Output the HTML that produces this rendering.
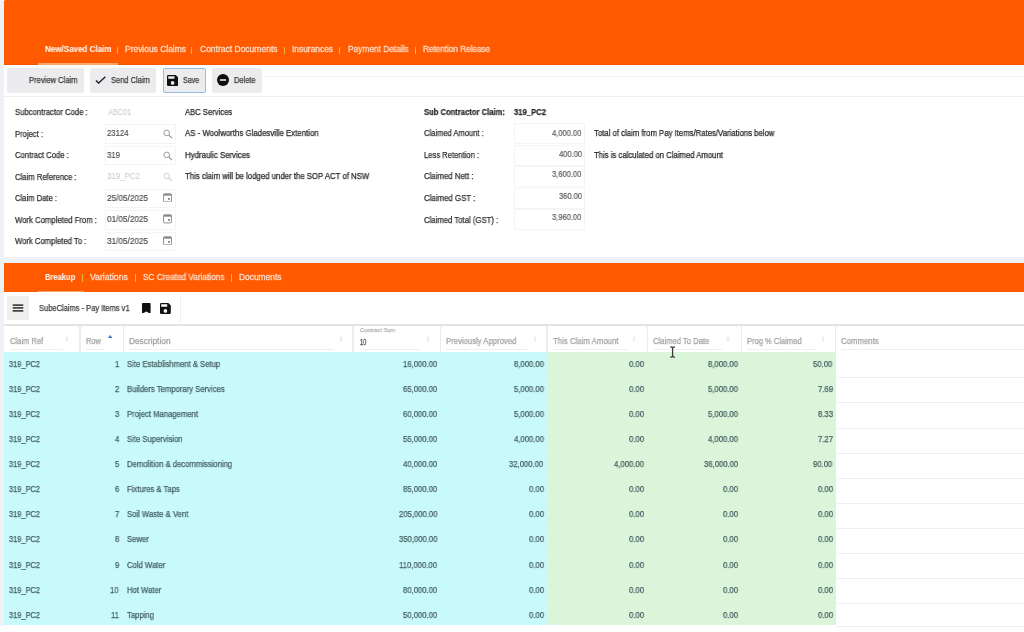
<!DOCTYPE html>
<html><head><meta charset="utf-8">
<style>
*{margin:0;padding:0;box-sizing:border-box}
html,body{width:1024px;height:632px;overflow:hidden;background:#eef1f5;font-family:"Liberation Sans",sans-serif;position:relative}
.t{position:absolute;white-space:pre;line-height:1;transform-origin:0 0;will-change:transform}
svg{display:block}
</style></head><body>
<div style="position:absolute;left:4.00px;top:0.00px;width:1020.00px;height:65.00px;background:#ff5a00;border-top-left-radius:1.5px"></div>
<div style="position:absolute;left:4.00px;top:64.00px;width:1020.00px;height:1.00px;background:#f25400"></div>
<div style="position:absolute;left:38.00px;top:63.00px;width:80.00px;height:2.00px;background:#f9a56e"></div>
<div style="position:absolute;left:116.50px;top:46.60px;width:1.10px;height:7.20px;background:#f2b43a"></div>
<div style="position:absolute;left:191.00px;top:46.60px;width:1.10px;height:7.20px;background:#f2b43a"></div>
<div style="position:absolute;left:283.50px;top:46.60px;width:1.10px;height:7.20px;background:#f2b43a"></div>
<div style="position:absolute;left:338.50px;top:46.60px;width:1.10px;height:7.20px;background:#f2b43a"></div>
<div style="position:absolute;left:414.50px;top:46.60px;width:1.10px;height:7.20px;background:#f2b43a"></div>
<div style="position:absolute;left:4.00px;top:65.00px;width:1020.00px;height:192.50px;background:#fff"></div>
<div style="position:absolute;left:4.00px;top:95.60px;width:1020.00px;height:1.00px;background:#efefef"></div>
<div style="position:absolute;left:264.00px;top:75.80px;width:760.00px;height:0.80px;background:#f3f7f9"></div>
<div style="position:absolute;left:4.00px;top:65.00px;width:1020.00px;height:3.00px;background:#f9fbfd"></div>
<div style="position:absolute;left:7.00px;top:68.00px;width:77.00px;height:25.00px;background:#ececee;border-radius:2px"></div>
<div style="position:absolute;left:90.00px;top:68.00px;width:66.00px;height:25.00px;background:#ececee;border-radius:2px"></div>
<div style="position:absolute;left:162.50px;top:68.20px;width:43.80px;height:24.50px;background:#ececee;border:1px solid #94bde3;border-radius:2px"></div>
<div style="position:absolute;left:212.30px;top:68.00px;width:49.70px;height:25.00px;background:#ececee;border-radius:2px"></div>
<svg style="position:absolute;left:94px;top:75px" width="14" height="10" viewBox="0 0 14 10"><path d="M1.9 5.4 L4.6 8.1 L11.4 1.8" fill="none" stroke="#1e1e1e" stroke-width="1.35"/></svg>
<svg style="position:absolute;left:167.2px;top:74.5px" width="11.2" height="11" viewBox="3 3 18 18" preserveAspectRatio="none"><path d="M17 3H5a2 2 0 0 0-2 2v14a2 2 0 0 0 2 2h14a2 2 0 0 0 2-2V7l-4-4zm-5 16a3 3 0 1 1 0-6 3 3 0 0 1 0 6zm3-10H5V5h10v4z" fill="#111"/></svg>
<svg style="position:absolute;left:217px;top:74.2px" width="12" height="12" viewBox="0 0 12 12"><circle cx="6" cy="6" r="6" fill="#0c0c0c"/><rect x="2.8" y="5.2" width="6.4" height="1.6" fill="#e6e6e6"/></svg>
<div style="position:absolute;left:105.00px;top:124.05px;width:71.00px;height:19.50px;border:1px solid #f4f4f4"></div>
<div style="position:absolute;left:105.00px;top:145.60px;width:71.00px;height:19.50px;border:1px solid #f4f4f4"></div>
<div style="position:absolute;left:105.00px;top:188.70px;width:71.00px;height:19.50px;border:1px solid #f4f4f4"></div>
<div style="position:absolute;left:105.00px;top:210.25px;width:71.00px;height:19.50px;border:1px solid #f4f4f4"></div>
<div style="position:absolute;left:105.00px;top:231.80px;width:71.00px;height:19.50px;border:1px solid #f4f4f4"></div>
<svg style="position:absolute;left:162.6px;top:128.95px" width="10" height="10" viewBox="0 0 10 10"><circle cx="3.7" cy="3.9" r="2.8" fill="none" stroke="#9a9a9a" stroke-width="1.0"/><path d="M5.8 6 L9 9.2" stroke="#9a9a9a" stroke-width="1.15"/></svg>
<svg style="position:absolute;left:162.6px;top:150.50px" width="10" height="10" viewBox="0 0 10 10"><circle cx="3.7" cy="3.9" r="2.8" fill="none" stroke="#9a9a9a" stroke-width="1.0"/><path d="M5.8 6 L9 9.2" stroke="#9a9a9a" stroke-width="1.15"/></svg>
<svg style="position:absolute;left:162.6px;top:172.05px" width="10" height="10" viewBox="0 0 10 10"><circle cx="3.7" cy="3.9" r="2.8" fill="none" stroke="#d0d0d0" stroke-width="1.0"/><path d="M5.8 6 L9 9.2" stroke="#d0d0d0" stroke-width="1.15"/></svg>
<svg style="position:absolute;left:163.3px;top:192.60px" width="9" height="9.4" viewBox="0 0 9 9.4"><rect x="0.55" y="0.8" width="7.9" height="8.1" rx="0.9" fill="none" stroke="#8c8c8c" stroke-width="0.95"/><rect x="0.55" y="0.8" width="7.9" height="1.9" fill="#8c8c8c"/><rect x="5.1" y="5" width="1.7" height="1.8" fill="#777"/></svg>
<svg style="position:absolute;left:163.3px;top:214.15px" width="9" height="9.4" viewBox="0 0 9 9.4"><rect x="0.55" y="0.8" width="7.9" height="8.1" rx="0.9" fill="none" stroke="#8c8c8c" stroke-width="0.95"/><rect x="0.55" y="0.8" width="7.9" height="1.9" fill="#8c8c8c"/><rect x="5.1" y="5" width="1.7" height="1.8" fill="#777"/></svg>
<svg style="position:absolute;left:163.3px;top:235.70px" width="9" height="9.4" viewBox="0 0 9 9.4"><rect x="0.55" y="0.8" width="7.9" height="8.1" rx="0.9" fill="none" stroke="#8c8c8c" stroke-width="0.95"/><rect x="0.55" y="0.8" width="7.9" height="1.9" fill="#8c8c8c"/><rect x="5.1" y="5" width="1.7" height="1.8" fill="#777"/></svg>
<div style="position:absolute;left:513.50px;top:123.30px;width:71.50px;height:21.00px;border:1px solid #f5f5f5"></div>
<div style="position:absolute;left:513.50px;top:144.80px;width:71.50px;height:21.00px;border:1px solid #f5f5f5"></div>
<div style="position:absolute;left:513.50px;top:166.30px;width:71.50px;height:21.00px;border:1px solid #f5f5f5"></div>
<div style="position:absolute;left:513.50px;top:187.80px;width:71.50px;height:21.00px;border:1px solid #f5f5f5"></div>
<div style="position:absolute;left:513.50px;top:209.30px;width:71.50px;height:21.00px;border:1px solid #f5f5f5"></div>
<div style="position:absolute;left:4.00px;top:256.80px;width:1020.00px;height:4.70px;background:#eff2f6"></div>
<div style="position:absolute;left:4.00px;top:262.70px;width:1020.00px;height:29.30px;background:#ff5a00"></div>
<div style="position:absolute;left:38.00px;top:290.50px;width:45.50px;height:1.50px;background:#f9a56e"></div>
<div style="position:absolute;left:82.30px;top:273.50px;width:1.10px;height:8.00px;background:#f2b43a"></div>
<div style="position:absolute;left:134.80px;top:273.50px;width:1.10px;height:8.00px;background:#f2b43a"></div>
<div style="position:absolute;left:230.60px;top:273.50px;width:1.10px;height:8.00px;background:#f2b43a"></div>
<div style="position:absolute;left:4.00px;top:292.00px;width:1020.00px;height:340.00px;background:#fff"></div>
<div style="position:absolute;left:7.10px;top:296.10px;width:21.80px;height:24.20px;background:#efeff0;border-radius:1px"></div>
<svg style="position:absolute;left:11px;top:302px" width="14" height="12" viewBox="0 0 14 12"><path d="M2.4 3.05 H11.6 M2.4 5.95 H11.6 M2.4 8.95 H11.6" stroke="#454545" stroke-width="1.75" stroke-linecap="round"/></svg>
<svg style="position:absolute;left:142px;top:302.5px" width="8.6" height="10.8" viewBox="0 0 8.6 10.8"><path d="M0 0.8 Q0 0 0.8 0 H7.8 Q8.6 0 8.6 0.8 V10.8 L4.3 8.6 L0 10.8 Z" fill="#111"/></svg>
<svg style="position:absolute;left:160.2px;top:302.5px" width="10.8" height="11" viewBox="3 3 18 18" preserveAspectRatio="none"><path d="M17 3H5a2 2 0 0 0-2 2v14a2 2 0 0 0 2 2h14a2 2 0 0 0 2-2V7l-4-4zm-5 16a3 3 0 1 1 0-6 3 3 0 0 1 0 6zm3-10H5V5h10v4z" fill="#111"/></svg>
<div style="position:absolute;left:179.80px;top:296.30px;width:1.00px;height:25.90px;background:#f0f0f0"></div>
<div style="position:absolute;left:4.00px;top:294.00px;width:1020.00px;height:0.80px;background:#f7f9fb"></div>
<div style="position:absolute;left:4.00px;top:323.80px;width:1020.00px;height:2.00px;background:#e3e3e3"></div>
<div style="position:absolute;left:79.30px;top:325.80px;width:1.30px;height:26.20px;background:#ececec"></div>
<div style="position:absolute;left:122.50px;top:325.80px;width:1.30px;height:26.20px;background:#ececec"></div>
<div style="position:absolute;left:352.30px;top:325.80px;width:1.30px;height:26.20px;background:#ececec"></div>
<div style="position:absolute;left:439.90px;top:325.80px;width:1.30px;height:26.20px;background:#ececec"></div>
<div style="position:absolute;left:546.30px;top:325.80px;width:1.30px;height:26.20px;background:#ececec"></div>
<div style="position:absolute;left:646.50px;top:325.80px;width:1.30px;height:26.20px;background:#ececec"></div>
<div style="position:absolute;left:740.50px;top:325.80px;width:1.30px;height:26.20px;background:#ececec"></div>
<div style="position:absolute;left:834.90px;top:325.80px;width:1.30px;height:26.20px;background:#ececec"></div>
<svg style="position:absolute;left:65.00px;top:335.8px" width="4" height="6" viewBox="0 0 4 6"><path d="M0.5 2.2 L2 0.4 L3.5 2.2 Z M0.5 3.5 L2 5.3 L3.5 3.5 Z" fill="#dcdcdc"/></svg>
<svg style="position:absolute;left:338.50px;top:335.8px" width="4" height="6" viewBox="0 0 4 6"><path d="M0.5 2.2 L2 0.4 L3.5 2.2 Z M0.5 3.5 L2 5.3 L3.5 3.5 Z" fill="#dcdcdc"/></svg>
<svg style="position:absolute;left:532.50px;top:335.8px" width="4" height="6" viewBox="0 0 4 6"><path d="M0.5 2.2 L2 0.4 L3.5 2.2 Z M0.5 3.5 L2 5.3 L3.5 3.5 Z" fill="#dcdcdc"/></svg>
<svg style="position:absolute;left:632.40px;top:335.8px" width="4" height="6" viewBox="0 0 4 6"><path d="M0.5 2.2 L2 0.4 L3.5 2.2 Z M0.5 3.5 L2 5.3 L3.5 3.5 Z" fill="#dcdcdc"/></svg>
<svg style="position:absolute;left:726.30px;top:335.8px" width="4" height="6" viewBox="0 0 4 6"><path d="M0.5 2.2 L2 0.4 L3.5 2.2 Z M0.5 3.5 L2 5.3 L3.5 3.5 Z" fill="#dcdcdc"/></svg>
<svg style="position:absolute;left:820.70px;top:335.8px" width="4" height="6" viewBox="0 0 4 6"><path d="M0.5 2.2 L2 0.4 L3.5 2.2 Z M0.5 3.5 L2 5.3 L3.5 3.5 Z" fill="#dcdcdc"/></svg>
<svg style="position:absolute;left:426px;top:335.8px" width="4" height="6" viewBox="0 0 4 6"><path d="M0.5 2.2 L2 0.4 L3.5 2.2 Z M0.5 3.5 L2 5.3 L3.5 3.5 Z" fill="#dcdcdc"/></svg>
<svg style="position:absolute;left:108.4px;top:335.4px" width="4.4" height="3" viewBox="0 0 4.4 3"><path d="M0 3 L2.2 0 L4.4 3 Z" fill="#3f6fc8"/></svg>
<div style="position:absolute;left:9.80px;top:349.20px;width:53.20px;height:1.00px;background:#f1eeee"></div>
<div style="position:absolute;left:85.90px;top:349.20px;width:18.10px;height:1.00px;background:#f1eeee"></div>
<div style="position:absolute;left:128.90px;top:349.20px;width:205.10px;height:1.00px;background:#f1eeee"></div>
<div style="position:absolute;left:359.70px;top:349.20px;width:60.80px;height:1.00px;background:#f1eeee"></div>
<div style="position:absolute;left:446.40px;top:349.20px;width:81.60px;height:1.00px;background:#f1eeee"></div>
<div style="position:absolute;left:553.20px;top:349.20px;width:74.80px;height:1.00px;background:#f1eeee"></div>
<div style="position:absolute;left:652.70px;top:349.20px;width:69.30px;height:1.00px;background:#f1eeee"></div>
<div style="position:absolute;left:746.60px;top:349.20px;width:69.40px;height:1.00px;background:#f1eeee"></div>
<div style="position:absolute;left:841.30px;top:349.20px;width:182.70px;height:1.00px;background:#f1eeee"></div>
<div style="position:absolute;left:4.00px;top:352.20px;width:542.80px;height:273.30px;background:#c8fafb"></div>
<div style="position:absolute;left:546.80px;top:352.20px;width:289.20px;height:273.30px;background:#daf5d9"></div>
<div style="position:absolute;left:4.00px;top:377.38px;width:832.00px;height:1.00px;background:rgba(255,255,255,0.12)"></div>
<div style="position:absolute;left:836.00px;top:377.38px;width:188.00px;height:1.00px;background:#efefef"></div>
<div style="position:absolute;left:4.00px;top:402.46px;width:832.00px;height:1.00px;background:rgba(255,255,255,0.12)"></div>
<div style="position:absolute;left:836.00px;top:402.46px;width:188.00px;height:1.00px;background:#efefef"></div>
<div style="position:absolute;left:4.00px;top:427.54px;width:832.00px;height:1.00px;background:rgba(255,255,255,0.12)"></div>
<div style="position:absolute;left:836.00px;top:427.54px;width:188.00px;height:1.00px;background:#efefef"></div>
<div style="position:absolute;left:4.00px;top:452.62px;width:832.00px;height:1.00px;background:rgba(255,255,255,0.12)"></div>
<div style="position:absolute;left:836.00px;top:452.62px;width:188.00px;height:1.00px;background:#efefef"></div>
<div style="position:absolute;left:4.00px;top:477.70px;width:832.00px;height:1.00px;background:rgba(255,255,255,0.12)"></div>
<div style="position:absolute;left:836.00px;top:477.70px;width:188.00px;height:1.00px;background:#efefef"></div>
<div style="position:absolute;left:4.00px;top:502.78px;width:832.00px;height:1.00px;background:rgba(255,255,255,0.12)"></div>
<div style="position:absolute;left:836.00px;top:502.78px;width:188.00px;height:1.00px;background:#efefef"></div>
<div style="position:absolute;left:4.00px;top:527.86px;width:832.00px;height:1.00px;background:rgba(255,255,255,0.12)"></div>
<div style="position:absolute;left:836.00px;top:527.86px;width:188.00px;height:1.00px;background:#efefef"></div>
<div style="position:absolute;left:4.00px;top:552.94px;width:832.00px;height:1.00px;background:rgba(255,255,255,0.12)"></div>
<div style="position:absolute;left:836.00px;top:552.94px;width:188.00px;height:1.00px;background:#efefef"></div>
<div style="position:absolute;left:4.00px;top:578.02px;width:832.00px;height:1.00px;background:rgba(255,255,255,0.12)"></div>
<div style="position:absolute;left:836.00px;top:578.02px;width:188.00px;height:1.00px;background:#efefef"></div>
<div style="position:absolute;left:4.00px;top:603.10px;width:832.00px;height:1.00px;background:rgba(255,255,255,0.12)"></div>
<div style="position:absolute;left:836.00px;top:603.10px;width:188.00px;height:1.00px;background:#efefef"></div>
<div style="position:absolute;left:836.00px;top:625.50px;width:188.00px;height:1.00px;background:#efefef"></div>
<div style="position:absolute;left:0.00px;top:626.00px;width:4.00px;height:6.00px;background:#fff"></div>
<div class="t" style="left:44.60px;top:45.26px;font-size:8.4px;font-weight:700;color:#fff0e6;transform:scaleX(0.9573);-webkit-text-stroke:0.1px #fff0e6;">New/Saved Claim</div>
<div class="t" style="left:125.00px;top:45.26px;font-size:8.4px;font-weight:400;color:#ffd8c2;transform:scaleX(1.0080);-webkit-text-stroke:0.3px #ffd8c2;">Previous Claims</div>
<div class="t" style="left:200.00px;top:45.26px;font-size:8.4px;font-weight:400;color:#ffd8c2;transform:scaleX(1.0151);-webkit-text-stroke:0.3px #ffd8c2;">Contract Documents</div>
<div class="t" style="left:291.50px;top:45.26px;font-size:8.4px;font-weight:400;color:#ffd8c2;transform:scaleX(1.0008);-webkit-text-stroke:0.3px #ffd8c2;">Insurances</div>
<div class="t" style="left:347.50px;top:45.26px;font-size:8.4px;font-weight:400;color:#ffd8c2;transform:scaleX(0.9921);-webkit-text-stroke:0.3px #ffd8c2;">Payment Details</div>
<div class="t" style="left:422.50px;top:45.26px;font-size:8.4px;font-weight:400;color:#ffd8c2;transform:scaleX(0.9723);-webkit-text-stroke:0.3px #ffd8c2;">Retention Release</div>
<div class="t" style="left:28.50px;top:76.14px;font-size:8.3px;font-weight:400;color:#3c3c3c;transform:scaleX(0.9146);-webkit-text-stroke:0.25px #3c3c3c;">Preview Claim</div>
<div class="t" style="left:111.00px;top:76.14px;font-size:8.3px;font-weight:400;color:#3c3c3c;transform:scaleX(0.9023);-webkit-text-stroke:0.25px #3c3c3c;">Send Claim</div>
<div class="t" style="left:183.40px;top:76.14px;font-size:8.3px;font-weight:400;color:#3c3c3c;transform:scaleX(0.8562);-webkit-text-stroke:0.25px #3c3c3c;">Save</div>
<div class="t" style="left:233.50px;top:76.14px;font-size:8.3px;font-weight:400;color:#3c3c3c;transform:scaleX(0.8964);-webkit-text-stroke:0.25px #3c3c3c;">Delete</div>
<div class="t" style="left:14.60px;top:107.94px;font-size:8.3px;font-weight:400;color:#303030;transform:scaleX(0.9272);-webkit-text-stroke:0.25px #303030;">Subcontractor Code :</div>
<div class="t" style="left:14.60px;top:129.50px;font-size:8.3px;font-weight:400;color:#303030;transform:scaleX(0.9199);-webkit-text-stroke:0.25px #303030;">Project :</div>
<div class="t" style="left:14.60px;top:151.04px;font-size:8.3px;font-weight:400;color:#303030;transform:scaleX(0.9241);-webkit-text-stroke:0.25px #303030;">Contract Code :</div>
<div class="t" style="left:14.60px;top:172.59px;font-size:8.3px;font-weight:400;color:#303030;transform:scaleX(0.9261);-webkit-text-stroke:0.25px #303030;">Claim Reference :</div>
<div class="t" style="left:14.60px;top:194.14px;font-size:8.3px;font-weight:400;color:#303030;transform:scaleX(0.9199);-webkit-text-stroke:0.25px #303030;">Claim Date :</div>
<div class="t" style="left:14.60px;top:215.69px;font-size:8.3px;font-weight:400;color:#303030;transform:scaleX(0.9326);-webkit-text-stroke:0.25px #303030;">Work Completed From :</div>
<div class="t" style="left:14.60px;top:237.25px;font-size:8.3px;font-weight:400;color:#303030;transform:scaleX(0.9239);-webkit-text-stroke:0.25px #303030;">Work Completed To :</div>
<div class="t" style="left:108.00px;top:107.94px;font-size:8.3px;font-weight:400;color:#c4c4c4;transform:scaleX(0.8746);-webkit-text-stroke:0px #c4c4c4;">ABC01</div>
<div class="t" style="left:107.40px;top:129.24px;font-size:8.6px;font-weight:400;color:#4a4a4a;transform:scaleX(0.9035);-webkit-text-stroke:0.15px #4a4a4a;">23124</div>
<div class="t" style="left:107.40px;top:150.79px;font-size:8.6px;font-weight:400;color:#4a4a4a;transform:scaleX(0.9063);-webkit-text-stroke:0.15px #4a4a4a;">319</div>
<div class="t" style="left:107.40px;top:172.34px;font-size:8.6px;font-weight:400;color:#c8c8c8;transform:scaleX(0.9207);-webkit-text-stroke:0px #c8c8c8;">319_PC2</div>
<div class="t" style="left:107.40px;top:193.89px;font-size:8.6px;font-weight:400;color:#4a4a4a;transform:scaleX(0.9531);-webkit-text-stroke:0.15px #4a4a4a;">25/05/2025</div>
<div class="t" style="left:107.40px;top:215.44px;font-size:8.6px;font-weight:400;color:#4a4a4a;transform:scaleX(0.9531);-webkit-text-stroke:0.15px #4a4a4a;">01/05/2025</div>
<div class="t" style="left:107.40px;top:236.99px;font-size:8.6px;font-weight:400;color:#4a4a4a;transform:scaleX(0.9531);-webkit-text-stroke:0.15px #4a4a4a;">31/05/2025</div>
<div class="t" style="left:184.60px;top:107.54px;font-size:8.3px;font-weight:400;color:#262626;transform:scaleX(0.9221);-webkit-text-stroke:0.25px #262626;">ABC Services</div>
<div class="t" style="left:184.60px;top:129.14px;font-size:8.3px;font-weight:400;color:#262626;transform:scaleX(0.9454);-webkit-text-stroke:0.25px #262626;">AS - Woolworths Gladesville Extention</div>
<div class="t" style="left:184.60px;top:150.64px;font-size:8.3px;font-weight:400;color:#262626;transform:scaleX(0.9461);-webkit-text-stroke:0.25px #262626;">Hydraulic Services</div>
<div class="t" style="left:184.60px;top:172.34px;font-size:8.3px;font-weight:400;color:#262626;transform:scaleX(0.9396);-webkit-text-stroke:0.25px #262626;">This claim will be lodged under the SOP ACT of NSW</div>
<div class="t" style="left:424.00px;top:107.94px;font-size:8.3px;font-weight:700;color:#2a2a2a;transform:scaleX(0.9177);-webkit-text-stroke:0.25px #2a2a2a;">Sub Contractor Claim:</div>
<div class="t" style="left:514.00px;top:107.94px;font-size:8.3px;font-weight:700;color:#2a2a2a;transform:scaleX(0.9246);-webkit-text-stroke:0.25px #2a2a2a;">319_PC2</div>
<div class="t" style="left:423.60px;top:128.94px;font-size:8.3px;font-weight:400;color:#303030;transform:scaleX(0.9117);-webkit-text-stroke:0.25px #303030;">Claimed Amount :</div>
<div class="t" style="left:423.60px;top:150.54px;font-size:8.3px;font-weight:400;color:#303030;transform:scaleX(0.9188);-webkit-text-stroke:0.25px #303030;">Less Retention :</div>
<div class="t" style="left:423.60px;top:172.44px;font-size:8.3px;font-weight:400;color:#303030;transform:scaleX(0.9415);-webkit-text-stroke:0.25px #303030;">Claimed Nett :</div>
<div class="t" style="left:423.60px;top:194.04px;font-size:8.3px;font-weight:400;color:#303030;transform:scaleX(0.9453);-webkit-text-stroke:0.25px #303030;">Claimed GST :</div>
<div class="t" style="left:423.60px;top:215.54px;font-size:8.3px;font-weight:400;color:#303030;transform:scaleX(0.9319);-webkit-text-stroke:0.25px #303030;">Claimed Total (GST) :</div>
<div class="t" style="left:552.30px;top:128.54px;font-size:8.3px;font-weight:400;color:#555;transform:scaleX(0.9072);-webkit-text-stroke:0.15px #555;">4,000.00</div>
<div class="t" style="left:558.60px;top:150.04px;font-size:8.3px;font-weight:400;color:#555;transform:scaleX(0.9058);-webkit-text-stroke:0.15px #555;">400.00</div>
<div class="t" style="left:552.30px;top:170.04px;font-size:8.3px;font-weight:400;color:#555;transform:scaleX(0.9072);-webkit-text-stroke:0.15px #555;">3,600.00</div>
<div class="t" style="left:558.60px;top:191.54px;font-size:8.3px;font-weight:400;color:#555;transform:scaleX(0.9058);-webkit-text-stroke:0.15px #555;">360.00</div>
<div class="t" style="left:552.30px;top:213.04px;font-size:8.3px;font-weight:400;color:#555;transform:scaleX(0.9072);-webkit-text-stroke:0.15px #555;">3,960.00</div>
<div class="t" style="left:594.00px;top:129.44px;font-size:8.3px;font-weight:400;color:#262626;transform:scaleX(0.9344);-webkit-text-stroke:0.25px #262626;">Total of claim from Pay Items/Rates/Variations below</div>
<div class="t" style="left:594.00px;top:150.94px;font-size:8.3px;font-weight:400;color:#262626;transform:scaleX(0.9316);-webkit-text-stroke:0.25px #262626;">This is calculated on Claimed Amount</div>
<div class="t" style="left:45.40px;top:272.86px;font-size:8.4px;font-weight:700;color:#fff0e6;transform:scaleX(0.9011);-webkit-text-stroke:0.1px #fff0e6;">Breakup</div>
<div class="t" style="left:90.20px;top:272.86px;font-size:8.4px;font-weight:400;color:#ffd8c2;transform:scaleX(1.0321);-webkit-text-stroke:0.3px #ffd8c2;">Variations</div>
<div class="t" style="left:142.70px;top:272.86px;font-size:8.4px;font-weight:400;color:#ffd8c2;transform:scaleX(0.9842);-webkit-text-stroke:0.3px #ffd8c2;">SC Created Variations</div>
<div class="t" style="left:238.80px;top:272.86px;font-size:8.4px;font-weight:400;color:#ffd8c2;transform:scaleX(1.0033);-webkit-text-stroke:0.3px #ffd8c2;">Documents</div>
<div class="t" style="left:38.70px;top:304.14px;font-size:8.3px;font-weight:400;color:#404040;transform:scaleX(0.9054);-webkit-text-stroke:0.25px #404040;">SubeClaims - Pay Items v1</div>
<div class="t" style="left:9.80px;top:337.05px;font-size:8.3px;font-weight:400;color:#a2a2a2;transform:scaleX(0.9115);-webkit-text-stroke:0.25px #a2a2a2;">Claim Ref</div>
<div class="t" style="left:85.90px;top:337.05px;font-size:8.3px;font-weight:400;color:#a2a2a2;transform:scaleX(0.8971);-webkit-text-stroke:0.25px #a2a2a2;">Row</div>
<div class="t" style="left:128.90px;top:337.05px;font-size:8.3px;font-weight:400;color:#a2a2a2;transform:scaleX(1.0000);-webkit-text-stroke:0.25px #a2a2a2;">Description</div>
<div class="t" style="left:446.40px;top:337.05px;font-size:8.3px;font-weight:400;color:#a2a2a2;transform:scaleX(0.9294);-webkit-text-stroke:0.25px #a2a2a2;">Previously Approved</div>
<div class="t" style="left:553.20px;top:337.05px;font-size:8.3px;font-weight:400;color:#a2a2a2;transform:scaleX(0.9408);-webkit-text-stroke:0.25px #a2a2a2;">This Claim Amount</div>
<div class="t" style="left:652.70px;top:337.05px;font-size:8.3px;font-weight:400;color:#a2a2a2;transform:scaleX(0.9201);-webkit-text-stroke:0.25px #a2a2a2;">Claimed To Date</div>
<div class="t" style="left:746.60px;top:337.05px;font-size:8.3px;font-weight:400;color:#a2a2a2;transform:scaleX(0.9107);-webkit-text-stroke:0.25px #a2a2a2;">Prog % Claimed</div>
<div class="t" style="left:841.30px;top:337.05px;font-size:8.3px;font-weight:400;color:#a2a2a2;transform:scaleX(0.9396);-webkit-text-stroke:0.25px #a2a2a2;">Comments</div>
<div class="t" style="left:359.70px;top:327.79px;font-size:5.9px;font-weight:400;color:#b4b4b4;transform:scaleX(0.9801);-webkit-text-stroke:0.25px #b4b4b4;">Contract Sum</div>
<div class="t" style="left:359.60px;top:336.74px;font-size:9.6px;font-weight:400;color:#555;transform:scaleX(0.5903);-webkit-text-stroke:0.35px #555;">10</div>
<div class="t" style="left:8.50px;top:359.96px;font-size:8.4px;font-weight:400;color:#465e62;transform:scaleX(0.8844);-webkit-text-stroke:0.25px #465e62;">319_PC2</div>
<div class="t" style="left:114.71px;top:359.96px;font-size:8.4px;font-weight:400;color:#465e62;transform:scaleX(0.9180);-webkit-text-stroke:0.25px #465e62;">1</div>
<div class="t" style="left:127.20px;top:359.96px;font-size:8.4px;font-weight:400;color:#465e62;transform:scaleX(0.9180);-webkit-text-stroke:0.25px #465e62;">Site Establishment &amp; Setup</div>
<div class="t" style="left:402.89px;top:359.96px;font-size:8.4px;font-weight:400;color:#465e62;transform:scaleX(0.9180);-webkit-text-stroke:0.25px #465e62;">16,000.00</div>
<div class="t" style="left:513.67px;top:359.96px;font-size:8.4px;font-weight:400;color:#465e62;transform:scaleX(0.9180);-webkit-text-stroke:0.25px #465e62;">8,000.00</div>
<div class="t" style="left:628.63px;top:359.96px;font-size:8.4px;font-weight:400;color:#465e62;transform:scaleX(0.9180);-webkit-text-stroke:0.25px #465e62;">0.00</div>
<div class="t" style="left:707.97px;top:359.96px;font-size:8.4px;font-weight:400;color:#465e62;transform:scaleX(0.9180);-webkit-text-stroke:0.25px #465e62;">8,000.00</div>
<div class="t" style="left:813.25px;top:359.96px;font-size:8.4px;font-weight:400;color:#465e62;transform:scaleX(0.9180);-webkit-text-stroke:0.25px #465e62;">50.00</div>
<div class="t" style="left:8.50px;top:385.03px;font-size:8.4px;font-weight:400;color:#465e62;transform:scaleX(0.8844);-webkit-text-stroke:0.25px #465e62;">319_PC2</div>
<div class="t" style="left:114.71px;top:385.03px;font-size:8.4px;font-weight:400;color:#465e62;transform:scaleX(0.9180);-webkit-text-stroke:0.25px #465e62;">2</div>
<div class="t" style="left:127.20px;top:385.03px;font-size:8.4px;font-weight:400;color:#465e62;transform:scaleX(0.9180);-webkit-text-stroke:0.25px #465e62;">Builders Temporary Services</div>
<div class="t" style="left:402.89px;top:385.03px;font-size:8.4px;font-weight:400;color:#465e62;transform:scaleX(0.9180);-webkit-text-stroke:0.25px #465e62;">65,000.00</div>
<div class="t" style="left:513.67px;top:385.03px;font-size:8.4px;font-weight:400;color:#465e62;transform:scaleX(0.9180);-webkit-text-stroke:0.25px #465e62;">5,000.00</div>
<div class="t" style="left:628.63px;top:385.03px;font-size:8.4px;font-weight:400;color:#465e62;transform:scaleX(0.9180);-webkit-text-stroke:0.25px #465e62;">0.00</div>
<div class="t" style="left:707.97px;top:385.03px;font-size:8.4px;font-weight:400;color:#465e62;transform:scaleX(0.9180);-webkit-text-stroke:0.25px #465e62;">5,000.00</div>
<div class="t" style="left:817.53px;top:385.03px;font-size:8.4px;font-weight:400;color:#465e62;transform:scaleX(0.9180);-webkit-text-stroke:0.25px #465e62;">7.69</div>
<div class="t" style="left:8.50px;top:410.10px;font-size:8.4px;font-weight:400;color:#465e62;transform:scaleX(0.8844);-webkit-text-stroke:0.25px #465e62;">319_PC2</div>
<div class="t" style="left:114.71px;top:410.10px;font-size:8.4px;font-weight:400;color:#465e62;transform:scaleX(0.9180);-webkit-text-stroke:0.25px #465e62;">3</div>
<div class="t" style="left:127.20px;top:410.10px;font-size:8.4px;font-weight:400;color:#465e62;transform:scaleX(0.9180);-webkit-text-stroke:0.25px #465e62;">Project Management</div>
<div class="t" style="left:402.89px;top:410.10px;font-size:8.4px;font-weight:400;color:#465e62;transform:scaleX(0.9180);-webkit-text-stroke:0.25px #465e62;">60,000.00</div>
<div class="t" style="left:513.67px;top:410.10px;font-size:8.4px;font-weight:400;color:#465e62;transform:scaleX(0.9180);-webkit-text-stroke:0.25px #465e62;">5,000.00</div>
<div class="t" style="left:628.63px;top:410.10px;font-size:8.4px;font-weight:400;color:#465e62;transform:scaleX(0.9180);-webkit-text-stroke:0.25px #465e62;">0.00</div>
<div class="t" style="left:707.97px;top:410.10px;font-size:8.4px;font-weight:400;color:#465e62;transform:scaleX(0.9180);-webkit-text-stroke:0.25px #465e62;">5,000.00</div>
<div class="t" style="left:817.53px;top:410.10px;font-size:8.4px;font-weight:400;color:#465e62;transform:scaleX(0.9180);-webkit-text-stroke:0.25px #465e62;">8.33</div>
<div class="t" style="left:8.50px;top:435.17px;font-size:8.4px;font-weight:400;color:#465e62;transform:scaleX(0.8844);-webkit-text-stroke:0.25px #465e62;">319_PC2</div>
<div class="t" style="left:114.71px;top:435.17px;font-size:8.4px;font-weight:400;color:#465e62;transform:scaleX(0.9180);-webkit-text-stroke:0.25px #465e62;">4</div>
<div class="t" style="left:127.20px;top:435.17px;font-size:8.4px;font-weight:400;color:#465e62;transform:scaleX(0.9180);-webkit-text-stroke:0.25px #465e62;">Site Supervision</div>
<div class="t" style="left:402.89px;top:435.17px;font-size:8.4px;font-weight:400;color:#465e62;transform:scaleX(0.9180);-webkit-text-stroke:0.25px #465e62;">55,000.00</div>
<div class="t" style="left:513.67px;top:435.17px;font-size:8.4px;font-weight:400;color:#465e62;transform:scaleX(0.9180);-webkit-text-stroke:0.25px #465e62;">4,000.00</div>
<div class="t" style="left:628.63px;top:435.17px;font-size:8.4px;font-weight:400;color:#465e62;transform:scaleX(0.9180);-webkit-text-stroke:0.25px #465e62;">0.00</div>
<div class="t" style="left:707.97px;top:435.17px;font-size:8.4px;font-weight:400;color:#465e62;transform:scaleX(0.9180);-webkit-text-stroke:0.25px #465e62;">4,000.00</div>
<div class="t" style="left:817.53px;top:435.17px;font-size:8.4px;font-weight:400;color:#465e62;transform:scaleX(0.9180);-webkit-text-stroke:0.25px #465e62;">7.27</div>
<div class="t" style="left:8.50px;top:460.24px;font-size:8.4px;font-weight:400;color:#465e62;transform:scaleX(0.8844);-webkit-text-stroke:0.25px #465e62;">319_PC2</div>
<div class="t" style="left:114.71px;top:460.24px;font-size:8.4px;font-weight:400;color:#465e62;transform:scaleX(0.9180);-webkit-text-stroke:0.25px #465e62;">5</div>
<div class="t" style="left:127.20px;top:460.24px;font-size:8.4px;font-weight:400;color:#465e62;transform:scaleX(0.9180);-webkit-text-stroke:0.25px #465e62;">Demolition &amp; decommissioning</div>
<div class="t" style="left:402.89px;top:460.24px;font-size:8.4px;font-weight:400;color:#465e62;transform:scaleX(0.9180);-webkit-text-stroke:0.25px #465e62;">40,000.00</div>
<div class="t" style="left:509.39px;top:460.24px;font-size:8.4px;font-weight:400;color:#465e62;transform:scaleX(0.9180);-webkit-text-stroke:0.25px #465e62;">32,000.00</div>
<div class="t" style="left:613.67px;top:460.24px;font-size:8.4px;font-weight:400;color:#465e62;transform:scaleX(0.9180);-webkit-text-stroke:0.25px #465e62;">4,000.00</div>
<div class="t" style="left:703.69px;top:460.24px;font-size:8.4px;font-weight:400;color:#465e62;transform:scaleX(0.9180);-webkit-text-stroke:0.25px #465e62;">36,000.00</div>
<div class="t" style="left:813.25px;top:460.24px;font-size:8.4px;font-weight:400;color:#465e62;transform:scaleX(0.9180);-webkit-text-stroke:0.25px #465e62;">90.00</div>
<div class="t" style="left:8.50px;top:485.31px;font-size:8.4px;font-weight:400;color:#465e62;transform:scaleX(0.8844);-webkit-text-stroke:0.25px #465e62;">319_PC2</div>
<div class="t" style="left:114.71px;top:485.31px;font-size:8.4px;font-weight:400;color:#465e62;transform:scaleX(0.9180);-webkit-text-stroke:0.25px #465e62;">6</div>
<div class="t" style="left:127.20px;top:485.31px;font-size:8.4px;font-weight:400;color:#465e62;transform:scaleX(0.9180);-webkit-text-stroke:0.25px #465e62;">Fixtures &amp; Taps</div>
<div class="t" style="left:402.89px;top:485.31px;font-size:8.4px;font-weight:400;color:#465e62;transform:scaleX(0.9180);-webkit-text-stroke:0.25px #465e62;">85,000.00</div>
<div class="t" style="left:528.63px;top:485.31px;font-size:8.4px;font-weight:400;color:#465e62;transform:scaleX(0.9180);-webkit-text-stroke:0.25px #465e62;">0.00</div>
<div class="t" style="left:628.63px;top:485.31px;font-size:8.4px;font-weight:400;color:#465e62;transform:scaleX(0.9180);-webkit-text-stroke:0.25px #465e62;">0.00</div>
<div class="t" style="left:722.93px;top:485.31px;font-size:8.4px;font-weight:400;color:#465e62;transform:scaleX(0.9180);-webkit-text-stroke:0.25px #465e62;">0.00</div>
<div class="t" style="left:817.53px;top:485.31px;font-size:8.4px;font-weight:400;color:#465e62;transform:scaleX(0.9180);-webkit-text-stroke:0.25px #465e62;">0.00</div>
<div class="t" style="left:8.50px;top:510.38px;font-size:8.4px;font-weight:400;color:#465e62;transform:scaleX(0.8844);-webkit-text-stroke:0.25px #465e62;">319_PC2</div>
<div class="t" style="left:114.71px;top:510.38px;font-size:8.4px;font-weight:400;color:#465e62;transform:scaleX(0.9180);-webkit-text-stroke:0.25px #465e62;">7</div>
<div class="t" style="left:127.20px;top:510.38px;font-size:8.4px;font-weight:400;color:#465e62;transform:scaleX(0.9180);-webkit-text-stroke:0.25px #465e62;">Soil Waste &amp; Vent</div>
<div class="t" style="left:398.62px;top:510.38px;font-size:8.4px;font-weight:400;color:#465e62;transform:scaleX(0.9180);-webkit-text-stroke:0.25px #465e62;">205,000.00</div>
<div class="t" style="left:528.63px;top:510.38px;font-size:8.4px;font-weight:400;color:#465e62;transform:scaleX(0.9180);-webkit-text-stroke:0.25px #465e62;">0.00</div>
<div class="t" style="left:628.63px;top:510.38px;font-size:8.4px;font-weight:400;color:#465e62;transform:scaleX(0.9180);-webkit-text-stroke:0.25px #465e62;">0.00</div>
<div class="t" style="left:722.93px;top:510.38px;font-size:8.4px;font-weight:400;color:#465e62;transform:scaleX(0.9180);-webkit-text-stroke:0.25px #465e62;">0.00</div>
<div class="t" style="left:817.53px;top:510.38px;font-size:8.4px;font-weight:400;color:#465e62;transform:scaleX(0.9180);-webkit-text-stroke:0.25px #465e62;">0.00</div>
<div class="t" style="left:8.50px;top:535.45px;font-size:8.4px;font-weight:400;color:#465e62;transform:scaleX(0.8844);-webkit-text-stroke:0.25px #465e62;">319_PC2</div>
<div class="t" style="left:114.71px;top:535.45px;font-size:8.4px;font-weight:400;color:#465e62;transform:scaleX(0.9180);-webkit-text-stroke:0.25px #465e62;">8</div>
<div class="t" style="left:127.20px;top:535.45px;font-size:8.4px;font-weight:400;color:#465e62;transform:scaleX(0.9180);-webkit-text-stroke:0.25px #465e62;">Sewer</div>
<div class="t" style="left:398.62px;top:535.45px;font-size:8.4px;font-weight:400;color:#465e62;transform:scaleX(0.9180);-webkit-text-stroke:0.25px #465e62;">350,000.00</div>
<div class="t" style="left:528.63px;top:535.45px;font-size:8.4px;font-weight:400;color:#465e62;transform:scaleX(0.9180);-webkit-text-stroke:0.25px #465e62;">0.00</div>
<div class="t" style="left:628.63px;top:535.45px;font-size:8.4px;font-weight:400;color:#465e62;transform:scaleX(0.9180);-webkit-text-stroke:0.25px #465e62;">0.00</div>
<div class="t" style="left:722.93px;top:535.45px;font-size:8.4px;font-weight:400;color:#465e62;transform:scaleX(0.9180);-webkit-text-stroke:0.25px #465e62;">0.00</div>
<div class="t" style="left:817.53px;top:535.45px;font-size:8.4px;font-weight:400;color:#465e62;transform:scaleX(0.9180);-webkit-text-stroke:0.25px #465e62;">0.00</div>
<div class="t" style="left:8.50px;top:560.52px;font-size:8.4px;font-weight:400;color:#465e62;transform:scaleX(0.8844);-webkit-text-stroke:0.25px #465e62;">319_PC2</div>
<div class="t" style="left:114.71px;top:560.52px;font-size:8.4px;font-weight:400;color:#465e62;transform:scaleX(0.9180);-webkit-text-stroke:0.25px #465e62;">9</div>
<div class="t" style="left:127.20px;top:560.52px;font-size:8.4px;font-weight:400;color:#465e62;transform:scaleX(0.9180);-webkit-text-stroke:0.25px #465e62;">Cold Water</div>
<div class="t" style="left:399.19px;top:560.52px;font-size:8.4px;font-weight:400;color:#465e62;transform:scaleX(0.9180);-webkit-text-stroke:0.25px #465e62;">110,000.00</div>
<div class="t" style="left:528.63px;top:560.52px;font-size:8.4px;font-weight:400;color:#465e62;transform:scaleX(0.9180);-webkit-text-stroke:0.25px #465e62;">0.00</div>
<div class="t" style="left:628.63px;top:560.52px;font-size:8.4px;font-weight:400;color:#465e62;transform:scaleX(0.9180);-webkit-text-stroke:0.25px #465e62;">0.00</div>
<div class="t" style="left:722.93px;top:560.52px;font-size:8.4px;font-weight:400;color:#465e62;transform:scaleX(0.9180);-webkit-text-stroke:0.25px #465e62;">0.00</div>
<div class="t" style="left:817.53px;top:560.52px;font-size:8.4px;font-weight:400;color:#465e62;transform:scaleX(0.9180);-webkit-text-stroke:0.25px #465e62;">0.00</div>
<div class="t" style="left:8.50px;top:585.59px;font-size:8.4px;font-weight:400;color:#465e62;transform:scaleX(0.8844);-webkit-text-stroke:0.25px #465e62;">319_PC2</div>
<div class="t" style="left:110.44px;top:585.59px;font-size:8.4px;font-weight:400;color:#465e62;transform:scaleX(0.9180);-webkit-text-stroke:0.25px #465e62;">10</div>
<div class="t" style="left:127.20px;top:585.59px;font-size:8.4px;font-weight:400;color:#465e62;transform:scaleX(0.9180);-webkit-text-stroke:0.25px #465e62;">Hot Water</div>
<div class="t" style="left:402.89px;top:585.59px;font-size:8.4px;font-weight:400;color:#465e62;transform:scaleX(0.9180);-webkit-text-stroke:0.25px #465e62;">80,000.00</div>
<div class="t" style="left:528.63px;top:585.59px;font-size:8.4px;font-weight:400;color:#465e62;transform:scaleX(0.9180);-webkit-text-stroke:0.25px #465e62;">0.00</div>
<div class="t" style="left:628.63px;top:585.59px;font-size:8.4px;font-weight:400;color:#465e62;transform:scaleX(0.9180);-webkit-text-stroke:0.25px #465e62;">0.00</div>
<div class="t" style="left:722.93px;top:585.59px;font-size:8.4px;font-weight:400;color:#465e62;transform:scaleX(0.9180);-webkit-text-stroke:0.25px #465e62;">0.00</div>
<div class="t" style="left:817.53px;top:585.59px;font-size:8.4px;font-weight:400;color:#465e62;transform:scaleX(0.9180);-webkit-text-stroke:0.25px #465e62;">0.00</div>
<div class="t" style="left:8.50px;top:610.66px;font-size:8.4px;font-weight:400;color:#465e62;transform:scaleX(0.8844);-webkit-text-stroke:0.25px #465e62;">319_PC2</div>
<div class="t" style="left:111.01px;top:610.66px;font-size:8.4px;font-weight:400;color:#465e62;transform:scaleX(0.9180);-webkit-text-stroke:0.25px #465e62;">11</div>
<div class="t" style="left:127.20px;top:610.66px;font-size:8.4px;font-weight:400;color:#465e62;transform:scaleX(0.9180);-webkit-text-stroke:0.25px #465e62;">Tapping</div>
<div class="t" style="left:402.89px;top:610.66px;font-size:8.4px;font-weight:400;color:#465e62;transform:scaleX(0.9180);-webkit-text-stroke:0.25px #465e62;">50,000.00</div>
<div class="t" style="left:528.63px;top:610.66px;font-size:8.4px;font-weight:400;color:#465e62;transform:scaleX(0.9180);-webkit-text-stroke:0.25px #465e62;">0.00</div>
<div class="t" style="left:628.63px;top:610.66px;font-size:8.4px;font-weight:400;color:#465e62;transform:scaleX(0.9180);-webkit-text-stroke:0.25px #465e62;">0.00</div>
<div class="t" style="left:722.93px;top:610.66px;font-size:8.4px;font-weight:400;color:#465e62;transform:scaleX(0.9180);-webkit-text-stroke:0.25px #465e62;">0.00</div>
<div class="t" style="left:817.53px;top:610.66px;font-size:8.4px;font-weight:400;color:#465e62;transform:scaleX(0.9180);-webkit-text-stroke:0.25px #465e62;">0.00</div>
<svg style="position:absolute;left:670.4px;top:345.6px" width="5.2" height="12" viewBox="0 0 5.2 12"><path d="M0.2 0.8 Q1.6 0.8 2.6 1.6 Q3.6 0.8 5 0.8 M2.6 1.6 V10.4 M0.2 11.2 Q1.6 11.2 2.6 10.4 Q3.6 11.2 5 11.2" fill="none" stroke="#3a3a3a" stroke-width="1.3"/></svg>
</body></html>
